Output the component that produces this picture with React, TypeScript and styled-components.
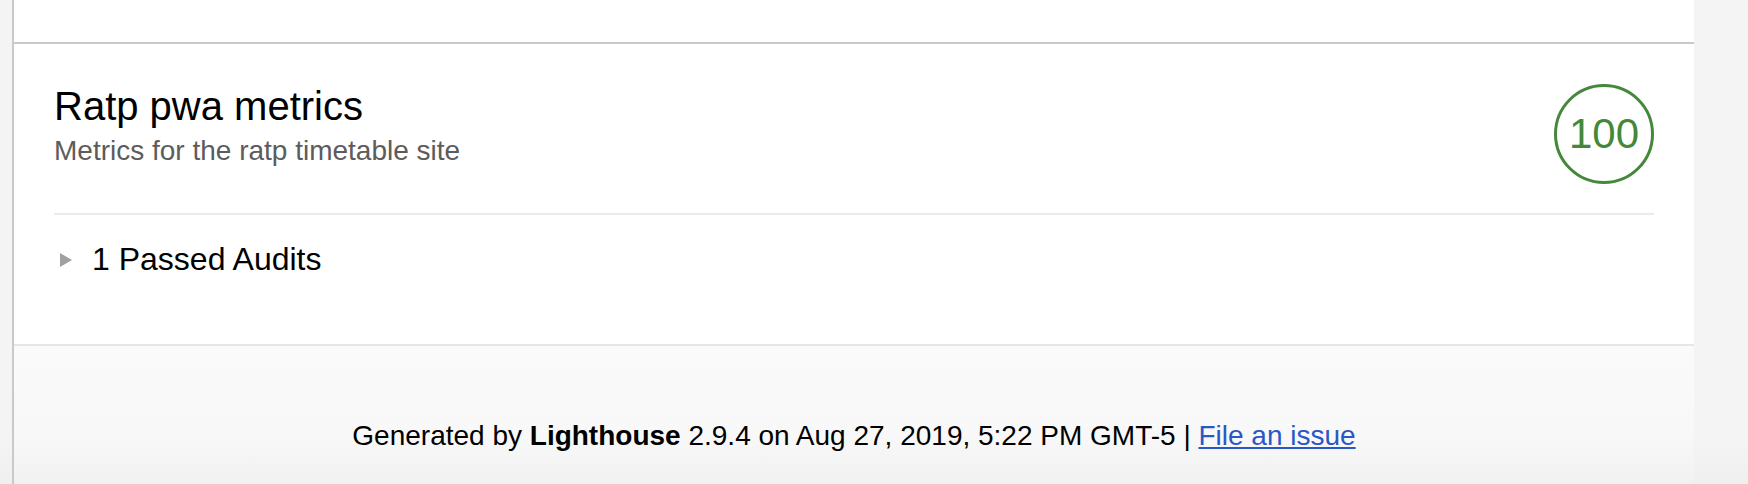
import styled, { createGlobalStyle } from 'styled-components';

const GlobalStyle = createGlobalStyle`
    html, body {
        margin: 0;
        padding: 0;
        background: #f4f4f4;
    }
    body {
        font-family: "Liberation Sans", Arial, sans-serif;
        color: #000;
    }
`;

const Page = styled.div`
    display: flex;
    min-height: 484px;
    background: linear-gradient(to bottom, #f4f4f4 0, #f4f4f4 440px, #efefef 484px);
`;

const Report = styled.div`
    margin-left: 12px;
    width: 1680px;
    border-left: 2px solid #c9c9c9;
    display: flex;
    flex-direction: column;
`;

const TopStrip = styled.div`
    height: 42px;
    background: #fff;
    border-bottom: 2px solid #c9c9c9;
`;

const Category = styled.section`
    background: #fff;
    padding: 38px 40px 65px;
    border-bottom: 2px solid #e6e6e6;
`;

const CategoryHeader = styled.div`
    display: flex;
    justify-content: space-between;
    align-items: flex-start;
    padding-bottom: 29px;
    border-bottom: 2px solid #ebebeb;
`;

const HeaderText = styled.div`
    display: flex;
    flex-direction: column;
    gap: 5px;
`;

const Title = styled.h2`
    margin: 0;
    font-size: 40px;
    line-height: 48px;
    font-weight: normal;
    color: #000;
`;

const Description = styled.p`
    margin: 0;
    font-size: 28px;
    line-height: 32px;
    color: #5c5c5c;
`;

const ScoreBadge = styled.div<{ $color: string }>`
    box-sizing: border-box;
    width: 100px;
    height: 100px;
    margin-top: 2px;
    border: 3.5px solid ${p => p.$color};
    border-radius: 50%;
    color: ${p => p.$color};
    display: flex;
    align-items: center;
    justify-content: center;
    font-size: 42px;
    line-height: 1;
`;

const AuditGroup = styled.div`
    display: flex;
    align-items: center;
    gap: 20px;
    padding: 24px 0 0 6px;
    font-size: 32px;
    line-height: 40px;
`;

const Marker = styled.span`
    width: 0;
    height: 0;
    border-left: 12px solid #a0a0a0;
    border-top: 7.5px solid transparent;
    border-bottom: 7.5px solid transparent;
    margin-top: 1px;
`;

const Footer = styled.footer`
    flex: 1;
    padding-top: 74px;
    text-align: center;
    font-size: 28px;
    line-height: 32px;
    background: linear-gradient(to bottom, #fafafa 0, #f8f8f8 90px, #f1f1f1 138px);
`;

const FooterLink = styled.a`
    color: #2a57c6;
    text-decoration: underline;
`;

const Gutter = styled.div`
    flex: 1;
`;

export default function App() {
    return <>
        <GlobalStyle />
        <Page>
            <Report>
                <TopStrip />
                <Category>
                    <CategoryHeader>
                        <HeaderText>
                            <Title>Ratp pwa metrics</Title>
                            <Description>Metrics for the ratp timetable site</Description>
                        </HeaderText>
                        <ScoreBadge $color="#44883a">100</ScoreBadge>
                    </CategoryHeader>
                    <AuditGroup>
                        <Marker />
                        <span>1 Passed Audits</span>
                    </AuditGroup>
                </Category>
                <Footer>
                    Generated by <b>Lighthouse</b> 2.9.4 on Aug 27, 2019, 5:22 PM GMT-5 | <FooterLink href="#">File an issue</FooterLink>
                </Footer>
            </Report>
            <Gutter />
        </Page>
    </>;
}
